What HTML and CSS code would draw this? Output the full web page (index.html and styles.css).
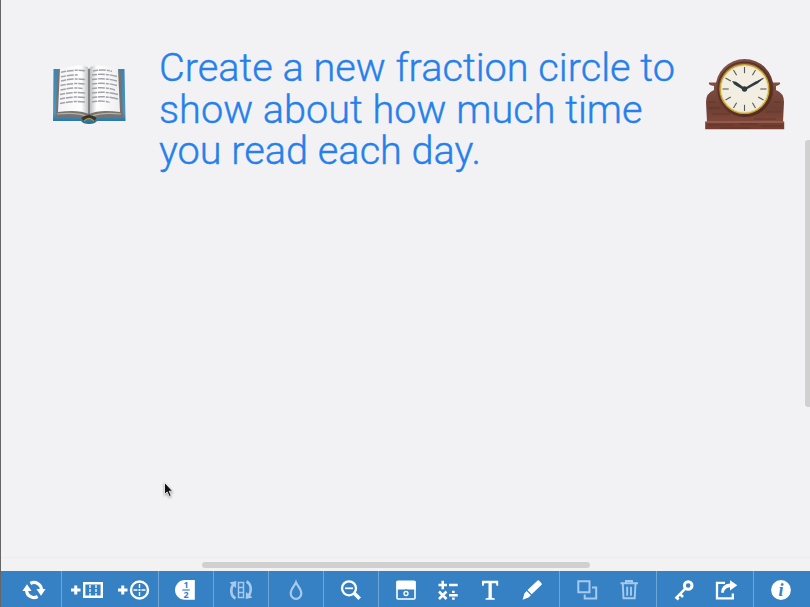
FILE: index.html
```html
<!DOCTYPE html>
<html lang="en">
<head>
<meta charset="utf-8">
<title>Fractions</title>
<link rel="stylesheet" href="styles.css">
</head>
<body>
<main class="board">
  <div class="prompt">
    <svg class="book" viewBox="0 0 76 62">
      <defs>
        <linearGradient id="pageL"><stop offset="0" stop-color="#f3f3f5"/><stop offset=".75" stop-color="#fff"/><stop offset="1" stop-color="#b9babd"/></linearGradient>
        <linearGradient id="pageR"><stop offset="0" stop-color="#b4b5b9"/><stop offset=".25" stop-color="#fff"/><stop offset="1" stop-color="#eeeef1"/></linearGradient>
        <linearGradient id="cover" x2="0" y2="1"><stop offset="0" stop-color="#3e84b1"/><stop offset=".8" stop-color="#4795c5"/><stop offset="1" stop-color="#236a99"/></linearGradient>
      </defs>
      <path d="M2.500 5h71l1 52H46q-2 3-8 3t-8-3H2z" fill="url(#cover)"/>
      <path d="M6 7L5 53q19-1 26 2h14q7-3 27-2L70 7z" fill="#77736e"/>
      <path d="M6 50q21-2 30 2.500h4q10-4.500 30-2.500" stroke="#b5b1aa" stroke-width="1.200" fill="none"/>
      <path d="M9 4.500q16-4 25-2.500 3 .5 4 3v45q-11-5-31-2z" fill="url(#pageL)"/>
      <path d="M67 4.500Q51 .5 42 2q-3 .5-4 3v45q11-5 31-2z" fill="url(#pageR)"/>
      <path d="M38 5v46" stroke="#5a5a5e" stroke-width="1.200"/>
      <g fill="none" stroke="#a2a3a9" stroke-width="1.500" stroke-dasharray="5 .8 7 1 3 .8 9 1">
        <path d="M10 8.300q13-3 24-1.500M10 12.800q10-2 17-2M10 17q13-3 24-1.500M9.500 21.500q14-3 24-1.500M9.500 26q14-3 22-1.500M9 30.500q14-3 25-1.500M9 35q14-3 25-1.500M9 39.500q14-3 25-1.500"/>
        <path d="M42 7q10-2 19 .3M41 11q13-2 25 1.500M41 15.500q13-2 25 1.500M41 20q13-2 25 1.500M41 24.500q13-2 23 1.500M41 29q13-2 26 1.500M41 33.500q13-2 26 1.500M41 38q10-2 18 .5"/>
      </g>
      <path d="M31.500 55.500q6.500-5 13 0" stroke="#35352f" stroke-width="4" fill="none"/>
      <path d="M33 57q5-5 10 0" stroke="#ad8c3a" stroke-width="1.500" fill="none"/>
    </svg>
    <h1 class="text">Create a new fraction circle to<br>show about how much time<br>you read each day.</h1>
    <svg class="clock" viewBox="0 0 82 74">
      <defs>
        <linearGradient id="wood" x2="0" y2="1"><stop offset="0" stop-color="#805044"/><stop offset=".65" stop-color="#6e3f33"/><stop offset="1" stop-color="#81483a"/></linearGradient>
        <linearGradient id="rim" x2=".6" y2="1"><stop offset="0" stop-color="#8b5c50"/><stop offset="1" stop-color="#54291f"/></linearGradient>
      </defs>
      <path d="M5 25.500h71q1 2.500-4 3.500v4q8 3 8 12l-1 20H3L2 45q0-9 8-12v-4q-6-1-5-3.500z" fill="url(#wood)"/>
      <path d="M1.200 64.500h79v7.700h-79z" fill="#743d30"/>
      <path d="M1.500 65h78.500" stroke="#a5796c"/>
      <path d="M4 45h8M4 51h12M8 57h18M50 62h22M62 55h15M70 45h7M4 68h25M36 67h18M57 69h21M16 71h30" stroke="#5b3025" stroke-width=".7"/>
      <circle cx="40.500" cy="31" r="29" fill="url(#rim)"/>
      <circle cx="40.500" cy="31.700" r="26.500" fill="none" stroke="#5b2f24" stroke-width="1.200"/>
      <circle cx="40.500" cy="32" r="24.300" fill="#f3eee2" stroke="#c6a636" stroke-width="1.500"/>
      <circle cx="40.500" cy="32" r="23.200" fill="none" stroke="#ead987" stroke-width=".7"/>
      <g stroke="#55595b" stroke-width="1.100">
        <path id="tick" d="M40.500 10v6.200"/>
        <use href="#tick" transform="rotate(30 40.500 32)"/><use href="#tick" transform="rotate(60 40.500 32)"/><use href="#tick" transform="rotate(90 40.500 32)"/><use href="#tick" transform="rotate(120 40.500 32)"/><use href="#tick" transform="rotate(150 40.500 32)"/><use href="#tick" transform="rotate(180 40.500 32)"/><use href="#tick" transform="rotate(210 40.500 32)"/><use href="#tick" transform="rotate(240 40.500 32)"/><use href="#tick" transform="rotate(270 40.500 32)"/><use href="#tick" transform="rotate(300 40.500 32)"/><use href="#tick" transform="rotate(330 40.500 32)"/>
      </g>
      <path d="M28 24l4 .8 3 2 6 4.500-1 2-7-4-3-2zM40.500 31l11-6.500 8-3-6 5-12 6.500z" fill="#2e3b40"/>
      <circle cx="40.500" cy="32" r="2.700" fill="#303b3f"/>
    </svg>
  </div>
  <div class="vthumb"></div>
  <svg class="pointer" viewBox="0 0 12 18"><path d="M1.500 1.500v12l2.700-2.600 2 4.600 2-1-2-4.300h3.500z" fill="#111" stroke="#fff" stroke-width=".8"/></svg>
  <div class="hscroll"><div class="hthumb"></div></div>
</main>
<nav class="toolbar">
  <div class="group reset">
    <svg class="icon" viewBox="0 0 24 24"><g fill="none" stroke="#fff" stroke-width="3.200"><path d="M4.600 12a7.300 7.300 0 0 0 11 6.500M19.400 12a7.300 7.300 0 0 0-11-6.500"/></g><path d="M.4 13L5 6.300l4.600 6.700zM14.400 11h9.200L19 17.700z" fill="#fff"/></svg>
  </div>
  <div class="group add">
    <svg class="icon wide" viewBox="0 0 34 24"><path d="M1 12h9.500M5.750 7.500v9" stroke="#fff" stroke-width="3"/><path d="M14.200 5.200h17.600v13.600H14.200z" fill="none" stroke="#fff" stroke-width="2.400"/><path d="M20 7v11M26 7v11" stroke="#fff" stroke-width="1.300" stroke-dasharray="3 1"/></svg>
    <svg class="icon wide" viewBox="0 0 34 24"><path d="M1 12h9.500M5.750 7.500v9" stroke="#fff" stroke-width="3"/><circle cx="22.500" cy="12" r="8.500" fill="none" stroke="#fff" stroke-width="2.400"/><path d="M22.500 6v4m0 1v2m0 1v4M16.500 12h4m1 0h2m1 0h4" stroke="#fff" stroke-width="1.400"/></svg>
  </div>
  <div class="group nudge">
    <svg class="icon" viewBox="0 0 24 24"><path d="M21.800 2H12C6 2 2 7 2 12s4 9.800 10 9.800h9.800z" fill="#fff"/><path d="M9.300 12h7.400" stroke="#3581c4" stroke-width="1.200"/><text class="frac" x="13" y="10">1</text><text class="frac" x="13" y="20">2</text></svg>
  </div>
  <div class="group">
    <svg class="icon rot" viewBox="0 0 26 24"><g fill="none" stroke="#a7caec" stroke-width="2.600"><path d="M7.500 20.500C2.500 18 2 11 5.500 6M18.500 3.500c5 2.500 5.500 9.500 2 14.500"/></g><path d="M1.500 4.500L8.300 3l-.3 7zM24.500 19.500L17.700 21l.3-7z" fill="#a7caec"/><path d="M10.500 4.500h5v15h-5zM10.500 9.500h5M10.500 14.500h5" fill="none" stroke="#a7caec" stroke-width="1.500"/></svg>
  </div>
  <div class="group">
    <svg class="icon" viewBox="0 0 24 24"><path d="M12 4.300C10.500 8 6.700 11 6.700 15.500a5.300 5.300 0 0 0 10.600 0C17.300 11 13.500 8 12 4.300z" fill="none" stroke="#a7caec" stroke-width="2.200"/></svg>
  </div>
  <div class="group">
    <svg class="icon" viewBox="0 0 24 24"><circle cx="10" cy="10.300" r="7" fill="none" stroke="#fff" stroke-width="2.300"/><path d="M6 10.300h8" stroke="#fff" stroke-width="1.700"/><path d="M15 15l5.700 5.700" stroke="#fff" stroke-width="3.600"/></svg>
  </div>
  <div class="group tools">
    <svg class="icon" viewBox="0 0 24 24"><rect x="3" y="3.200" width="18" height="17.800" rx="1" fill="none" stroke="#fff" stroke-width="1.600"/><path d="M2.500 3h19v8.500h-19z" fill="#fff"/><path d="M12 11v3" stroke="#3581c4" stroke-width="1.400"/><circle cx="12" cy="15.500" r="2" fill="none" stroke="#fff" stroke-width="1.300"/></svg>
    <svg class="icon" viewBox="0 0 24 24"><path d="M2.500 7h8.500M6.750 2.700v8.500M13 7h8.700M13 17.300h8.700M3 13.500l7.500 7.500M10.500 13.500L3 21" stroke="#fff" stroke-width="2.500"/><path d="M16.100 12.800h2.600v2.300h-2.600zM16.100 19.500h2.600v2.300h-2.600z" fill="#fff"/></svg>
    <svg class="icon" viewBox="0 0 24 24"><path d="M4 2.700h16.200v5h-1.700l-.5-2.400h-4.200v14.400l3 .7v1.400H7.500v-1.400l3-.7V5.300H6.200l-.5 2.400H4z" fill="#fff"/></svg>
    <svg class="icon" viewBox="0 0 24 24"><path d="M17.600 2.500q.7-.5 1.400.1L21.600 5.400q.6.700 0 1.300L11.700 16.300 7.500 12zM6.700 13l4.200 4.200L8.500 19.500 2.600 21.800l1.900-6.600z" fill="#fff"/></svg>
  </div>
  <div class="group edit">
    <svg class="icon" viewBox="0 0 24 24"><path d="M3.300 3.300h11.200v11H3.300zM17 9.500h4.200v11H9.700v-4" fill="none" stroke="#a7caec" stroke-width="2"/></svg>
    <svg class="icon" viewBox="0 0 24 24"><path d="M3.500 5.300h17.500M9 5V3h6v2M5.800 6l.7 14.300h11.200L18.500 6M10.200 8.700v9M14 8.700v9" fill="none" stroke="#a7caec" stroke-width="1.900"/></svg>
  </div>
  <div class="group share">
    <svg class="icon" viewBox="0 0 24 24"><circle cx="16.200" cy="7.500" r="3.800" fill="none" stroke="#fff" stroke-width="3"/><path d="M13 10.800L3.500 20.600M8 16l3 3M4.200 19l2.500 2.500" fill="none" stroke="#fff" stroke-width="2.500"/></svg>
    <svg class="icon" viewBox="0 0 24 24"><path d="M11 4.800H3v15.600h15.800v-5" fill="none" stroke="#fff" stroke-width="2.300"/><path d="M16 2.300l7.300 5L16 12.500V9.300q-5 .2-6.500 5.700l-2.400-.5Q7.500 6 16 5.500z" fill="#fff"/></svg>
  </div>
  <div class="group nudge">
    <svg class="icon" viewBox="0 0 24 24"><circle cx="12" cy="12" r="9.900" fill="#fff"/><text class="i" x="12" y="18">i</text></svg>
  </div>
</nav>
</body>
</html>
```
FILE: styles.css
```css
* { box-sizing: border-box; }
body {
  margin: 0;
  height: 607px;
  overflow: hidden;
  display: flex;
  flex-direction: column;
  border-left: 1px solid #666;
  background: #f2f2f5;
}
.board {
  position: relative;
  flex: 1;
  display: flex;
  flex-direction: column;
  justify-content: space-between;
}
.prompt {
  display: flex;
  align-items: flex-start;
  padding: 47px 0 0 50px;
}
svg { display: block; flex: none; }
.book { width: 76px; height: 62px; margin-top: 17px; }
.text {
  margin: 0 0 0 32px;
  width: 544px;
  font: 300 39.7px/41.5px Roboto, sans-serif;
  color: #2680eb;
  -webkit-text-stroke: .4px #2680eb;
  white-space: nowrap;
}
.clock { width: 82px; height: 74px; margin: 10px 0 0 1px; }
.vthumb {
  position: absolute;
  right: 0;
  top: 140px;
  width: 5px;
  height: 267px;
  border-radius: 3px 0 0 3px;
  background: #d0d0d0;
}
.pointer {
  position: absolute;
  left: 162px;
  top: 481px;
  width: 12px;
  height: 18px;
  filter: drop-shadow(0 1px 1px #999);
}
.hscroll {
  height: 14px;
  padding: 4px 0 0 201px;
  border-top: 1px solid #ededee;
  background: #f2f2f3;
}
.hthumb { width: 388px; height: 6px; border-radius: 3px; background: #d0d0d0; }
.toolbar {
  height: 36px;
  display: grid;
  grid-template-columns: 61px 97px 55px 55px 55px 55px 181px 97px 97px 1fr;
  background: #3581c4;
}
.group {
  display: flex;
  align-items: center;
  justify-content: center;
  padding-top: 2px;
  border-right: 1px solid #6ea6d8;
}
.group:last-child { border-right: 0; }
.icon { width: 24px; height: 24px; }
.wide { width: 34px; }
.rot { width: 26px; }
.reset { padding-left: 6px; }
.add { gap: 13px; padding-left: 1px; }
.nudge { padding-right: 2px; }
.tools { gap: 18px; }
.edit { gap: 18px; }
.share { gap: 18px; }
.frac { font: 700 9px "Open Sans", sans-serif; fill: #3581c4; text-anchor: middle; }
.i { font: italic 700 18px "Liberation Serif", serif; fill: #3581c4; text-anchor: middle; }
```
